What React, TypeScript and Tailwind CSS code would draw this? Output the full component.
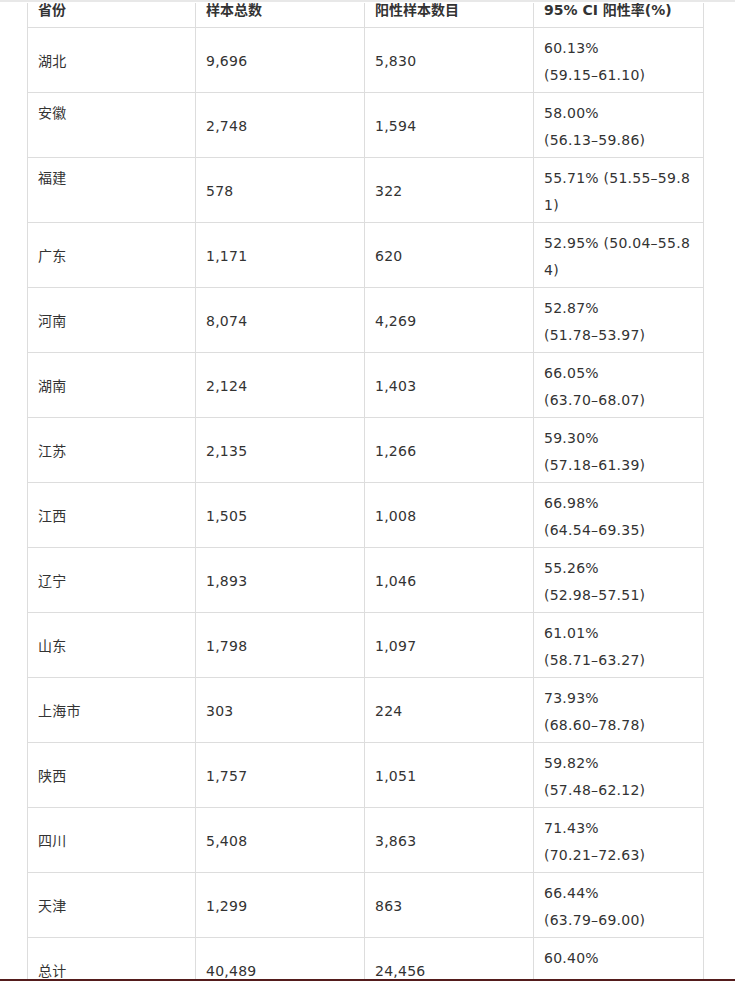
import React from "react";

type Row = { p: string; n: string; pos: string; ci: string[]; top?: boolean; ciTop?: boolean };

const rows: Row[] = [
  { p: "湖北", n: "9,696", pos: "5,830", ci: ["60.13%", "(59.15–61.10)"] },
  { p: "安徽", n: "2,748", pos: "1,594", ci: ["58.00%", "(56.13–59.86)"], top: true },
  { p: "福建", n: "578", pos: "322", ci: ["55.71% (51.55–59.8", "1)"], top: true },
  { p: "广东", n: "1,171", pos: "620", ci: ["52.95% (50.04–55.8", "4)"] },
  { p: "河南", n: "8,074", pos: "4,269", ci: ["52.87%", "(51.78–53.97)"] },
  { p: "湖南", n: "2,124", pos: "1,403", ci: ["66.05%", "(63.70–68.07)"] },
  { p: "江苏", n: "2,135", pos: "1,266", ci: ["59.30%", "(57.18–61.39)"] },
  { p: "江西", n: "1,505", pos: "1,008", ci: ["66.98%", "(64.54–69.35)"] },
  { p: "辽宁", n: "1,893", pos: "1,046", ci: ["55.26%", "(52.98–57.51)"] },
  { p: "山东", n: "1,798", pos: "1,097", ci: ["61.01%", "(58.71–63.27)"] },
  { p: "上海市", n: "303", pos: "224", ci: ["73.93%", "(68.60–78.78)"] },
  { p: "陕西", n: "1,757", pos: "1,051", ci: ["59.82%", "(57.48–62.12)"] },
  { p: "四川", n: "5,408", pos: "3,863", ci: ["71.43%", "(70.21–72.63)"] },
  { p: "天津", n: "1,299", pos: "863", ci: ["66.44%", "(63.79–69.00)"] },
  { p: "总计", n: "40,489", pos: "24,456", ci: ["60.40%"], ciTop: true },
];

const font = { fontFamily: '"DejaVu Sans", "Noto Sans CJK SC", sans-serif' };

export default function App() {
  return (
    <div className="w-[735px] h-[981px] overflow-hidden bg-white flex flex-col text-[14px] text-[#333333]" style={font}>
      <div className="h-[2px] shrink-0 bg-[#e8e8e8]" />
      <div className="h-[1px] shrink-0" />
      <div className="flex-1 overflow-hidden min-h-0">
        <div className="ml-[27px] w-[677px] border-l border-[#dddddd]">
          {/* header */}
          <div className="grid grid-cols-[168px_169px_169px_170px] border-b border-[#dddddd] -mt-[11px] h-[36px] font-bold">
            {["省份", "样本总数", "阳性样本数目", "95% CI 阳性率(%)"].map((h) => (
              <div key={h} className="border-r border-[#dddddd] px-[10px] pt-[2px] flex items-center leading-[27px] whitespace-nowrap">
                {h}
              </div>
            ))}
          </div>
          {rows.map((r) => (
            <div key={r.p} className="grid grid-cols-[168px_169px_169px_170px] border-b border-[#dddddd] h-[65px] tracking-[0.25px]">
              <div className={`border-r border-[#dddddd] px-[10px] flex flex-col leading-[27px] ${r.top ? "justify-start pt-[7px] pb-[3px]" : "justify-center pt-[6px] pb-[4px]"}`}>
                <span>{r.p}</span>
              </div>
              <div className="border-r border-[#dddddd] px-[10px] pt-[6px] pb-[4px] flex flex-col justify-center leading-[27px]">
                <span>{r.n}</span>
              </div>
              <div className="border-r border-[#dddddd] px-[10px] pt-[6px] pb-[4px] flex flex-col justify-center leading-[27px]">
                <span>{r.pos}</span>
              </div>
              <div className={`border-r border-[#dddddd] px-[10px] pt-[7px] pb-[3px] flex flex-col leading-[27px] whitespace-nowrap ${r.ciTop ? "justify-start" : "justify-center"}`}>
                {r.ci.map((l, i) => (
                  <span key={i}>{l}</span>
                ))}
              </div>
            </div>
          ))}
        </div>
      </div>
      <div className="h-[2px] shrink-0 bg-[#541c1c]" />
    </div>
  );
}
